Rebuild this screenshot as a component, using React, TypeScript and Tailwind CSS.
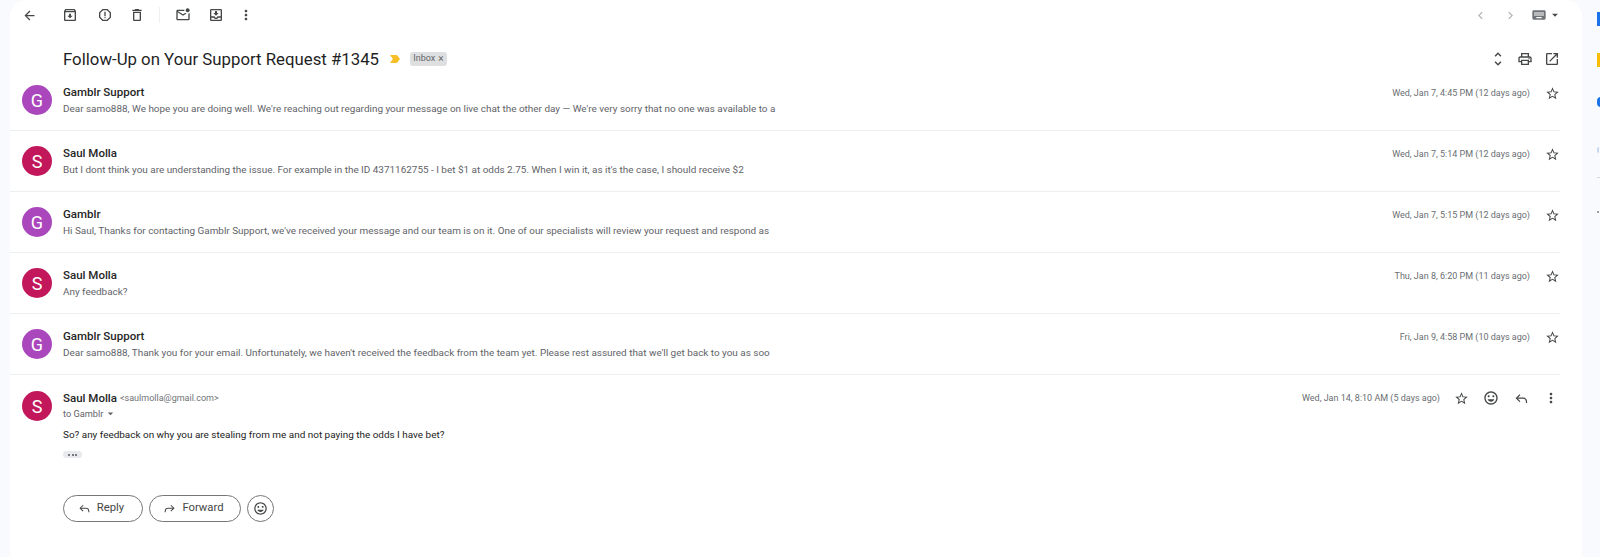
import React from 'react'
import {
  MdArrowBack,
  MdArrowDropDown,
  MdChevronLeft,
  MdChevronRight,
  MdKeyboard,
  MdLabelImportant,
  MdMoreVert,
  MdOutlineArchive,
  MdOutlineDelete,
  MdOutlineInsertEmoticon,
  MdOutlineMarkEmailUnread,
  MdOutlineMoveToInbox,
  MdOutlineOpenInNew,
  MdOutlinePrint,
  MdOutlineReport,
  MdStarBorder,
  MdUnfoldMore,
} from 'react-icons/md'

const PURPLE = 'bg-[#ab47bc]'
const CRIMSON = 'bg-[#c2185b]'

const messages = [
  {
    initial: 'G',
    color: PURPLE,
    name: 'Gamblr Support',
    preview:
      "Dear samo888, We hope you are doing well. We're reaching out regarding your message on live chat the other day — We're very sorry that no one was available to a",
    time: 'Wed, Jan 7, 4:45 PM (12 days ago)',
  },
  {
    initial: 'S',
    color: CRIMSON,
    name: 'Saul Molla',
    preview:
      "But I dont think you are understanding the issue. For example in the ID 4371162755 - I bet $1 at odds 2.75. When I win it, as it's the case, I should receive $2",
    time: 'Wed, Jan 7, 5:14 PM (12 days ago)',
  },
  {
    initial: 'G',
    color: PURPLE,
    name: 'Gamblr',
    preview:
      "Hi Saul, Thanks for contacting Gamblr Support, we've received your message and our team is on it. One of our specialists will review your request and respond as",
    time: 'Wed, Jan 7, 5:15 PM (12 days ago)',
  },
  {
    initial: 'S',
    color: CRIMSON,
    name: 'Saul Molla',
    preview: 'Any feedback?',
    time: 'Thu, Jan 8, 6:20 PM (11 days ago)',
  },
  {
    initial: 'G',
    color: PURPLE,
    name: 'Gamblr Support',
    preview:
      "Dear samo888, Thank you for your email. Unfortunately, we haven't received the feedback from the team yet. Please rest assured that we'll get back to you as soo",
    time: 'Fri, Jan 9, 4:58 PM (10 days ago)',
  },
]

function Avatar({ initial, color }: { initial: string; color: string }) {
  return (
    <div
      className={`flex h-[30px] w-[30px] shrink-0 items-center justify-center rounded-full text-[18px] text-white ${color}`}
    >
      {initial}
    </div>
  )
}

function ToolIcon({ children, className = '' }: { children: React.ReactNode; className?: string }) {
  return <span className={`flex h-[14px] w-5 items-center justify-center text-[#444746] ${className}`}>{children}</span>
}

// Gmail's thin reply arrow, MdReply is too heavy here
function ReplyArrow({ size, className = '' }: { size: number; className?: string }) {
  return (
    <svg
      width={size}
      height={size}
      viewBox="0 0 24 24"
      fill="none"
      stroke="currentColor"
      strokeWidth="1.9"
      className={className}
    >
      <path d="M9.5 6 4 11.5 9.5 17" />
      <path d="M4 11.5h10.5a5.5 5.5 0 0 1 5.5 5.5v2" />
    </svg>
  )
}

export default function App() {
  return (
    <div className="flex h-[557px] w-[1600px] overflow-hidden bg-[#f8fafd] font-['Roboto',sans-serif] text-[#1f1f1f]">
      <main className="ml-[10px] w-[1572px] shrink-0 rounded-t-2xl bg-white">
        {/* toolbar */}
        <div className="flex h-[30px] items-center pl-[9px] pr-[20px]">
          <ToolIcon><MdArrowBack size={15} /></ToolIcon>
          <ToolIcon className="ml-[21px]"><MdOutlineArchive size={16} /></ToolIcon>
          <ToolIcon className="ml-[15px]"><MdOutlineReport size={16} /></ToolIcon>
          <ToolIcon className="ml-3"><MdOutlineDelete size={16} /></ToolIcon>
          <div className="ml-3 h-[16px] w-px bg-[#eef0f2]" />
          <ToolIcon className="ml-[13px]"><MdOutlineMarkEmailUnread size={16} /></ToolIcon>
          <ToolIcon className="ml-[13px]"><MdOutlineMoveToInbox size={16} /></ToolIcon>
          <ToolIcon className="ml-[10px]"><MdMoreVert size={16} /></ToolIcon>
          <div className="ml-auto flex items-center">
            <ToolIcon className="!text-[#b4b7ba]"><MdChevronLeft size={15} /></ToolIcon>
            <ToolIcon className="ml-[10px] !text-[#b4b7ba]"><MdChevronRight size={15} /></ToolIcon>
            <ToolIcon className="ml-[9px] !text-[#6f7377]"><MdKeyboard size={16} /></ToolIcon>
            <MdArrowDropDown size={14} className="-ml-[1px] text-[#444746]" />
          </div>
        </div>

        {/* subject */}
        <div className="mt-[18px] flex h-[22px] items-center pl-[53px] pr-[20px]">
          <h1 className="text-[16.8px] leading-none">Follow-Up on Your Support Request #1345</h1>
          <MdLabelImportant size={14} className="ml-[9px] text-[#f6bf26]" />
          <span className="ml-[8px] flex h-[14px] w-[37px] items-center justify-center gap-[3px] rounded-[3px] bg-[#dddfe1] text-[9px] text-[#666]">
            Inbox <span className="text-[10px] leading-none">×</span>
          </span>
          <div className="ml-auto flex items-center gap-[7px] text-[#444746]">
            <ToolIcon><MdUnfoldMore size={18} /></ToolIcon>
            <ToolIcon><MdOutlinePrint size={16} /></ToolIcon>
            <ToolIcon><MdOutlineOpenInNew size={16} /></ToolIcon>
          </div>
        </div>

        {/* collapsed messages */}
        <div className="mr-[22px]">
          {messages.map((m) => (
            <div key={m.time} className="flex h-[61px] items-start border-b border-[#eceff1] pl-[12px] pt-[15px]">
              <Avatar initial={m.initial} color={m.color} />
              <div className="ml-[11px] min-w-0 flex-1">
                <div className="text-[11.5px] font-medium leading-[14px] text-[#262626]">{m.name}</div>
                <div className="mt-[2.5px] text-[9.93px] leading-[13px] text-[#5f6368]">{m.preview}</div>
              </div>
              <div className="-mr-[2px] mt-px flex items-center">
                <span className="text-[9px] leading-[14px] text-[#6a6e72]">{m.time}</span>
                <ToolIcon className="ml-[12px]"><MdStarBorder size={15} /></ToolIcon>
              </div>
            </div>
          ))}
        </div>

        {/* open message */}
        <div className="mr-[22px] flex pl-[12px] pt-[16px]">
          <Avatar initial="S" color={CRIMSON} />
          <div className="ml-[11px] min-w-0 flex-1">
            <div className="-mr-px flex items-center">
              <span className="text-[11.5px] font-medium leading-[14px] text-[#262626]">Saul Molla</span>
              <span className="ml-[3px] text-[9px] leading-[14px] text-[#6f7377]">&lt;saulmolla@gmail.com&gt;</span>
              <span className="ml-auto text-[9px] leading-[14px] text-[#6a6e72]">Wed, Jan 14, 8:10 AM (5 days ago)</span>
              <ToolIcon className="ml-[11px]"><MdStarBorder size={15} /></ToolIcon>
              <ToolIcon className="ml-[10px]"><MdOutlineInsertEmoticon size={16} /></ToolIcon>
              <ToolIcon className="ml-[10px]"><ReplyArrow size={15} /></ToolIcon>
              <ToolIcon className="ml-[10px]"><MdMoreVert size={16} /></ToolIcon>
            </div>
            <div className="mt-[2px] flex items-center text-[9.2px] leading-[13px] text-[#5f6368]">
              to Gamblr <MdArrowDropDown size={13} className="ml-[1px]" />
            </div>
            <p className="mt-[8px] text-[9.95px] leading-[13px] text-[#222]">
              So? any feedback on why you are stealing from me and not paying the odds I have bet?
            </p>
            <div className="mt-[10px] flex h-[7px] w-[19px] items-center justify-center gap-[1.5px] rounded-full bg-[#e8eaed]">
              <span className="h-[2px] w-[2px] rounded-full bg-[#555]" />
              <span className="h-[2px] w-[2px] rounded-full bg-[#555]" />
              <span className="h-[2px] w-[2px] rounded-full bg-[#555]" />
            </div>
            <div className="mt-[37px] flex gap-[6px] text-[11.3px] text-[#444746]">
              <button className="flex h-[27px] w-[80px] items-center justify-center gap-[6px] rounded-full border border-[#747775] pr-[4px]">
                <ReplyArrow size={13} /> Reply
              </button>
              <button className="flex h-[27px] w-[92px] items-center justify-center gap-[6px] rounded-full border border-[#747775] pr-[3px]">
                <ReplyArrow size={13} className="-scale-x-100" /> Forward
              </button>
              <button className="flex h-[27px] w-[27px] items-center justify-center rounded-full border border-[#747775]">
                <MdOutlineInsertEmoticon size={15} />
              </button>
            </div>
          </div>
        </div>
      </main>

      {/* side panel, cut off at the window edge */}
      <aside className="flex flex-col items-start pl-[15px]">
        <div className="mt-[12px] h-[14px] w-[4px] bg-[#1a73e8]" />
        <div className="mt-[27px] h-[14px] w-[4px] bg-[#fbbc04]" />
        <div className="mt-[30px] h-[10px] w-[4px] rounded-l-full bg-[#1a73e8]" />
        <div className="mt-[40px] h-[6px] w-[2px] rounded-l-full bg-[#c4d7f5]" />
        <div className="mt-[24px] h-px w-[4px] bg-[#d5d8dc]" />
        <div className="mt-[33px] h-[2px] w-[2px] bg-[#9aa0a6]" />
      </aside>
    </div>
  )
}
